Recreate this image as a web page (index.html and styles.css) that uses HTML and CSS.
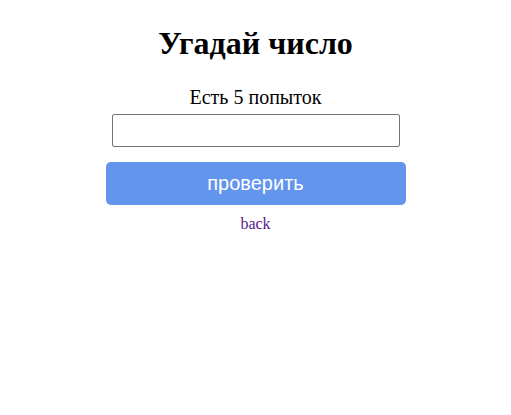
FILE: index.html
```
<!DOCTYPE html>
<html lang="ru">
<head>
<meta charset="utf-8">
<title>Угадай число</title>
<link rel="stylesheet" href="styles.css">
</head>
<body>
<main class="game">
  <h1 class="title">Угадай число</h1>
  <form class="form">
    <label class="hint" for="guess">Есть 5 попыток</label>
    <input class="field" id="guess" type="text">
    <button class="btn" type="button">проверить</button>
  </form>
  <a class="back" href="#">back</a>
</main>
</body>
</html>
```
FILE: styles.css
```
body {
  margin: 8px;
  font-family: "Liberation Serif", "Times New Roman", serif;
  background: #fff;
  color: #000;
}
.game {
  display: flex;
  flex-direction: column;
  align-items: center;
}
.title {
  font-size: 32px;
  font-weight: bold;
  margin: 17px 0 0;
  line-height: 37px;
}
.form {
  display: flex;
  flex-direction: column;
  align-items: center;
  margin-top: 24px;
}
.hint {
  font-size: 20px;
  line-height: 23px;
}
.field {
  box-sizing: border-box;
  width: 288px;
  height: 33px;
  margin-top: 5px;
  border: 1px solid #767676;
  border-radius: 2px;
  padding: 0 4px;
  font-size: 16px;
}
.btn {
  box-sizing: border-box;
  width: 300px;
  height: 43px;
  margin-top: 15px;
  border: none;
  border-radius: 5px;
  background: #6495ed;
  color: #fff;
  font-family: "Liberation Sans", Arial, sans-serif;
  font-size: 20px;
}
.back {
  margin-top: 10px;
  font-size: 16px;
  color: #551a8b;
  text-decoration: none;
}
```
